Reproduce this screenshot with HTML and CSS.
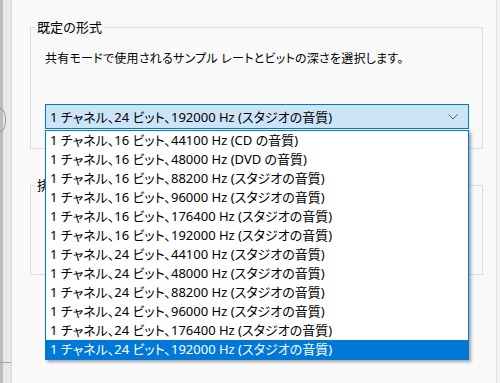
FILE: index.html
```html
<!DOCTYPE html>
<html lang="ja">
<head>
    <meta charset="UTF-8">
    <title>既定の形式</title>
    <link rel="stylesheet" href="styles.css">
</head>
<body>
    <div class="edge">
        <div class="edge-knob"></div>
        <div class="edge-rule"></div>
    </div>

    <div class="page">
        <fieldset class="group group-format">
            <legend>既定の形式</legend>
            <p class="hint">共有モードで使用されるサンプル レートとビットの深さを選択します。</p>

            <div class="combo">
                <div class="combo-box">
                    <span>1 チャネル、24 ビット、192000 Hz (スタジオの音質)</span>
                    <svg class="chevron" width="10" height="6" viewBox="0 0 10 6">
                        <path d="M0.5 0.5 L5 5 L9.5 0.5" fill="none" stroke="#5a5a5a" stroke-width="1"/>
                    </svg>
                </div>

                <ul class="combo-list">
                    <li>1 チャネル、16 ビット、44100 Hz (CD の音質)</li>
                    <li>1 チャネル、16 ビット、48000 Hz (DVD の音質)</li>
                    <li>1 チャネル、16 ビット、88200 Hz (スタジオの音質)</li>
                    <li>1 チャネル、16 ビット、96000 Hz (スタジオの音質)</li>
                    <li>1 チャネル、16 ビット、176400 Hz (スタジオの音質)</li>
                    <li>1 チャネル、16 ビット、192000 Hz (スタジオの音質)</li>
                    <li>1 チャネル、24 ビット、44100 Hz (スタジオの音質)</li>
                    <li>1 チャネル、24 ビット、48000 Hz (スタジオの音質)</li>
                    <li>1 チャネル、24 ビット、88200 Hz (スタジオの音質)</li>
                    <li>1 チャネル、24 ビット、96000 Hz (スタジオの音質)</li>
                    <li>1 チャネル、24 ビット、176400 Hz (スタジオの音質)</li>
                    <li class="selected">1 チャネル、24 ビット、192000 Hz (スタジオの音質)</li>
                </ul>
            </div>
        </fieldset>

        <fieldset class="group group-exclusive">
            <legend>排他モード</legend>
        </fieldset>
    </div>

    <div class="edge-right"></div>
</body>
</html>
```

FILE: styles.css
```css
* {
    margin: 0;
    padding: 0;
    box-sizing: border-box;
}

body {
    width: 500px;
    height: 383px;
    overflow: hidden;
    display: flex;
    background: #f9f9f9;
    color: #000;
    font-family: "Noto Sans", "Noto Sans CJK JP", sans-serif;
    font-size: 12px;
    font-feature-settings: "palt";
    line-height: 16px;
}

/* left edge of the neighbouring window */
.edge {
    width: 12px;
    flex: none;
    display: flex;
    flex-direction: column;
    background: linear-gradient(to right, #bcbcbc 0 3px, #e8e8e8 3px 11px, #d8d8d8 11px 12px);
}

.edge-knob {
    width: 12px;
    height: 24px;
    margin: 108px 0 0 -6px;
    border: 1px solid #9a9a9a;
    border-radius: 50%;
}

.edge-rule {
    width: 11px;
    margin-top: 230px;
    border-top: 1px solid #a8a8a8;
}

.edge-right {
    width: 4px;
    flex: none;
    border-left: 1px solid #e3e3e3;
    background: #f3f3f3;
}

.page {
    flex: 1;
    padding-top: 19px;
}

.group {
    margin: 0 13px 0 18px;
    border: 1px solid #dcdcdc;
    padding: 0 13px 0 14px;
}

.group legend {
    margin-left: -10px;
    padding: 0 2px;
    font-size: 13px;
    font-feature-settings: normal;
}

.group-format {
    padding-bottom: 19px;
}

.group-exclusive {
    margin-top: 28px;
    height: 98px;
}

.hint {
    margin-top: 16px;
    letter-spacing: 0.25px;
}

.combo {
    position: relative;
    margin-top: 37px;
    font-size: 13px;
}

.combo-box {
    height: 25px;
    display: flex;
    align-items: center;
    justify-content: space-between;
    padding: 0 10px 0 4px;
    background: #cce4f7;
    border: 1px solid #0078d7;
}

.chevron {
    flex: none;
}

.combo-list {
    position: absolute;
    top: 26px;
    left: 0;
    right: 0;
    list-style: none;
    background: #fff;
    border: 1px solid #0078d7;
    box-shadow: 2px 2px 3px rgba(0, 0, 0, 0.35);
}

.combo-list li {
    height: 19px;
    line-height: 19px;
    padding-left: 4px;
    white-space: nowrap;
}

.combo-list li.selected {
    background: #0078d7;
    color: #fff;
}
```
